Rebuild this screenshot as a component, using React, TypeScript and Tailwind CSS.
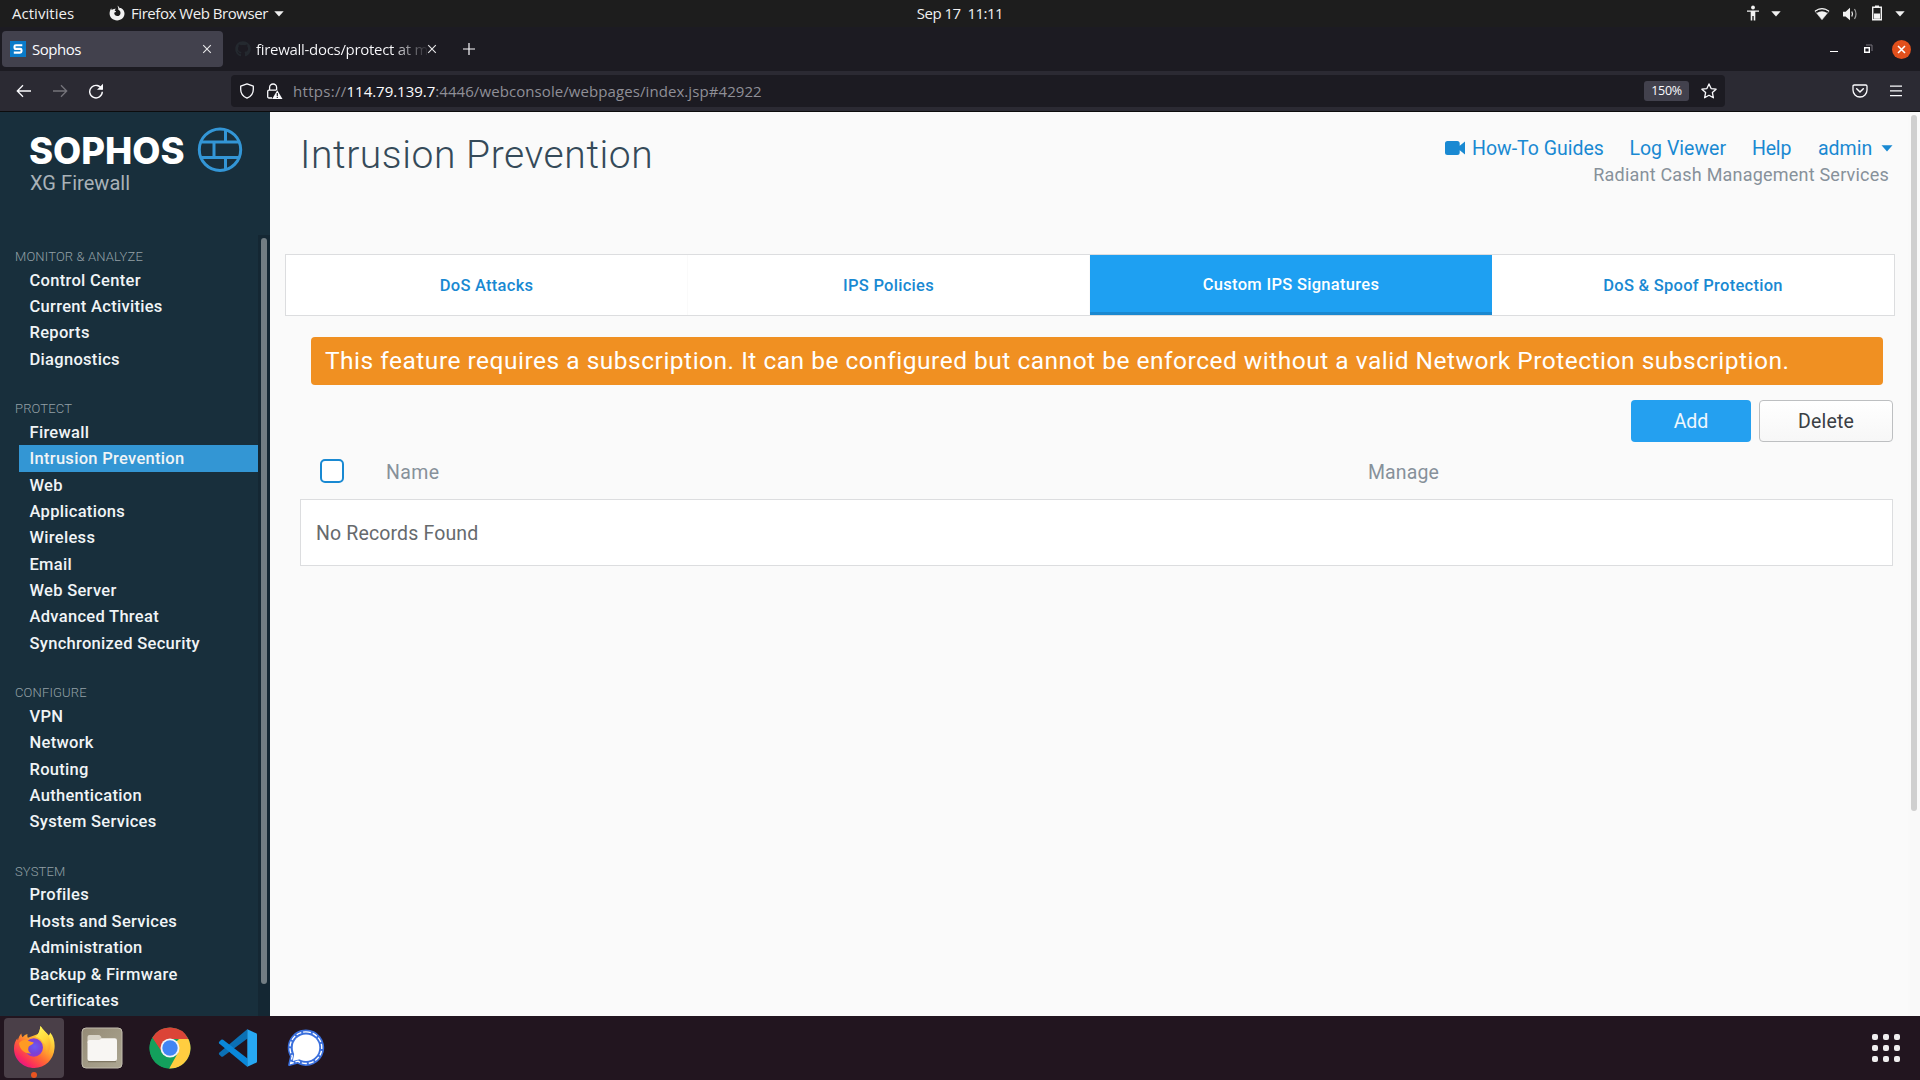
import type { ReactNode } from "react";
import { FaGithub } from "react-icons/fa";

const navGroups = [
  { title: "MONITOR & ANALYZE", items: ["Control Center", "Current Activities", "Reports", "Diagnostics"] },
  {
    title: "PROTECT",
    items: [
      "Firewall",
      "Intrusion Prevention",
      "Web",
      "Applications",
      "Wireless",
      "Email",
      "Web Server",
      "Advanced Threat",
      "Synchronized Security",
    ],
  },
  { title: "CONFIGURE", items: ["VPN", "Network", "Routing", "Authentication", "System Services"] },
  {
    title: "SYSTEM",
    items: ["Profiles", "Hosts and Services", "Administration", "Backup & Firmware", "Certificates"],
  },
];

function Caret({ className }: { className: string }) {
  return (
    <svg viewBox="0 0 10 6" className={className} fill="currentColor">
      <path d="M0.3 0.3h9.4L5 5.6z" />
    </svg>
  );
}

function CloseX() {
  return (
    <svg viewBox="0 0 10 10" className="size-[10px] shrink-0" fill="none" stroke="#e8e8ea" strokeWidth="1.1">
      <path d="M1.2 1.2l7.6 7.6M8.8 1.2l-7.6 7.6" />
    </svg>
  );
}

function SystemBar() {
  return (
    <header className="grid h-[27px] shrink-0 grid-cols-[1fr_auto_1fr] items-center bg-[#1d1d1d] text-[15px] text-[#f0f0f0]">
      <div className="flex items-center pl-3">
        <span className="w-[97px] tracking-[0.03px]">Activities</span>
        <svg viewBox="0 0 16 16" className="mt-[-1px] size-4" fill="#f2f2f2">
          <path d="M8.3.5c1.2.7 2 1.6 2.4 2.7.6-.2 1.1-.1 1.6.1C14.3 4.600 15.500 6.500 15.500 8.600c0 3.900-3.300 6.900-7.400 6.900S.6 12.500.6 8.600C.6 6.500 1.300 4.500 2.300 3.200c0 .700.200 1.200.500 1.700C3.500 4.300 4.300 4 5.300 4c.500-.300 1-.400 1.600-.300C6.200 4.300 5.700 5 5.800 5.700c.900.200 1.300.500 1.200.900-.200.700-1.600.700-1.800 1.500.100 1.700 1.500 3 3.100 3 1.800 0 3.200-1.400 3.200-3.200 0-1.500-.900-2.600-2.200-3.100C9.500 3.300 9.100 1.800 8.300.5z" />
        </svg>
        <span className="ml-[6px] tracking-[-0.45px]">Firefox Web Browser</span>
        <Caret className="ml-[6px] h-[6px] w-[10px]" />
      </div>
      <span className="whitespace-pre tracking-[-0.5px]">Sep 17  11:11</span>
      <div className="flex items-center justify-end pr-[15px]">
        <svg viewBox="0 0 14 16" className="mt-[-1px] h-4 w-[14px]" fill="#f2f2f2">
          <circle cx="7" cy="2.500" r="1.900" />
          <path d="M1 5.500h12v1.300H9.300V15.500H7.700V11H6.300v4.500H4.700V6.800H1z" />
        </svg>
        <Caret className="ml-[11px] h-[6px] w-[10px]" />
        <svg viewBox="0 0 16 14" className="ml-[33px] h-[14px] w-4" fill="none">
          <path d="M1 4.200Q8-.8 15 4.200L8 12.800z" stroke="#8a8a8a" strokeWidth="1" />
          <path d="M1 4.200Q8-.8 15 4.200" stroke="#f2f2f2" strokeWidth="1.200" />
          <path d="M2.600 6Q8 2.300 13.400 6L8 12.800z" fill="#f2f2f2" />
        </svg>
        <svg viewBox="0 0 16 14" className="ml-[12px] h-[14px] w-4" fill="none">
          <path d="M1 4.800h2.600L8 .8v12.400L3.600 9.400H1z" fill="#f2f2f2" />
          <path d="M9.800 4.500q1.400 2.500 0 5" stroke="#f2f2f2" strokeWidth="1.200" />
          <path d="M12.500 2q3 5 0 10" stroke="#a0a0a0" strokeWidth="1.200" />
        </svg>
        <svg viewBox="0 0 12 16" className="ml-[13px] mt-[-1px] h-4 w-3">
          <path d="M4 .5h4v2H4z" fill="#f2f2f2" />
          <path d="M1.700 2.200h8.600v12.600H1.700z" fill="none" stroke="#f2f2f2" strokeWidth="1.400" />
          <path d="M3 8.500h6v5.300H3z" fill="#f2f2f2" />
        </svg>
        <Caret className="ml-[12px] h-[6px] w-[10px]" />
      </div>
    </header>
  );
}

function TabStrip() {
  return (
    <div className="flex h-11 shrink-0 items-center bg-[#1c1b22] pr-[9px] pl-[2px] text-[15px] text-[#fbfbfe]">
      <div className="flex h-9 w-[221px] items-center rounded bg-[#42414d] pr-[11px] pl-2">
        <svg viewBox="0 0 16 16" className="size-4">
          <path d="M0 0h16v16H0z" fill="#0a7bc9" />
          <path d="M12.300 4.200H5.800Q4.500 4.200 4.500 5.500v.9Q4.500 7.900 6 7.900h4.200q1.300 0 1.300 1.200v1.200q0 1.300-1.500 1.300H3.800" fill="none" stroke="#fff" strokeWidth="2.100" />
        </svg>
        <span className="ml-[6px] flex-1 tracking-[-0.5px]">Sophos</span>
        <CloseX />
      </div>
      <div className="ml-3 flex h-9 items-center">
        <FaGithub className="size-4 text-[#24292f]" />
        <span className="ml-[5px] w-[171px] bg-gradient-to-r from-[#fbfbfe] from-[80%] to-[#2a2930] bg-clip-text tracking-[-0.3px] whitespace-nowrap text-transparent">
          firewall-docs/protect at m
        </span>
        <CloseX />
      </div>
      <svg viewBox="0 0 12 12" className="ml-[26px] size-3" stroke="#fbfbfe" strokeWidth="1.200">
        <path d="M6 0v12M0 6h12" />
      </svg>
      <div className="ml-auto flex items-center gap-[24px]">
        <div className="mt-1 h-px w-2 bg-white" />
        <svg viewBox="0 0 10 10" className="ml-[1px] size-[10px]" fill="none">
          <path d="M3 1h6v6" stroke="#76757c" strokeWidth="1" />
          <path d="M1.700 3.700h4.600v4.600H1.700z" stroke="#fff" strokeWidth="1.400" />
        </svg>
        <svg viewBox="0 0 18 18" className="ml-[-5px] size-[19px]">
          <circle cx="9" cy="9" r="9" fill="#e2501c" />
          <path d="M5.700 5.700l6.600 6.600M12.300 5.700l-6.600 6.600" stroke="#fff" strokeWidth="1.500" />
        </svg>
      </div>
    </div>
  );
}

function Toolbar() {
  return (
    <div className="flex h-[41px] shrink-0 items-center border-b border-[#0c0c0d] bg-[#2b2a33] pr-[17px] pl-4 text-[15px]">
      <svg viewBox="0 0 16 16" className="size-4" fill="none" stroke="#fbfbfe" strokeWidth="1.300">
        <path d="M15 8H1.500M7 2.300L1.300 8 7 13.700" />
      </svg>
      <svg viewBox="0 0 16 16" className="ml-5 size-4" fill="none" stroke="#75747b" strokeWidth="1.300">
        <path d="M1 8h13.500M9 2.300L14.700 8 9 13.700" />
      </svg>
      <svg viewBox="0 0 16 16" className="ml-5 size-4" fill="none" stroke="#fbfbfe" strokeWidth="1.400">
        <path d="M13.800 6.200A6.300 6.300 0 1 0 14.300 8.800" />
        <path d="M15 .8v6H9z" fill="#fbfbfe" stroke="none" />
      </svg>
      <div className="ml-[127px] flex h-8 w-[1494px] items-center rounded bg-[#1c1b22] pr-2 pl-2">
        <svg viewBox="0 0 16 16" className="size-4" fill="none" stroke="#fbfbfe" strokeWidth="1.300">
          <path d="M8 .9l6.300 2.200v3.400c0 4-2.300 7-6.300 8.700C4 13.500 1.700 10.500 1.700 6.500V3.100z" strokeLinejoin="round" />
        </svg>
        <svg viewBox="0 0 17 17" className="ml-[11px] size-[17px]" fill="none">
          <path d="M3.600 7V4.500a3.500 3.500 0 0 1 7 0V7" stroke="#fbfbfe" strokeWidth="1.300" />
          <path d="M6 15H3a1.300 1.300 0 0 1-1.300-1.300V8.400A1.300 1.300 0 0 1 3 7.100h7.500" stroke="#fbfbfe" strokeWidth="1.300" />
          <path d="M11.300 7.200l5.200 8.800H6.100z" fill="#fbfbfe" />
          <path d="M11.300 10v3M11.300 13.800v1.200" stroke="#1c1b22" strokeWidth="1.200" />
        </svg>
        <div className="ml-[10px] flex flex-1 text-[#8f8f97]">
          <span className="tracking-[0.3px]">https://</span>
          <span className="tracking-[-0.03px] text-[#fbfbfe]">114.79.139.7</span>
          <span className="tracking-[0.080px]">:4446/webconsole/webpages/index.jsp#42922</span>
        </div>
        <span className="mr-3 flex h-5 w-[45px] items-center justify-center rounded-[3px] bg-[#42414d] text-[12.5px] tracking-[-0.3px] text-[#fbfbfe]">
          150%
        </span>
        <svg viewBox="0 0 16 16" className="size-4" fill="none" stroke="#fbfbfe" strokeWidth="1.300" strokeLinejoin="round">
          <path d="M8 .9l2.100 4.700 5 .6-3.700 3.400 1 5.200L8 12.300l-4.400 2.500 1-5.200L.9 6.200l5-.6z" />
        </svg>
      </div>
      <div className="ml-auto flex items-center gap-[21px]">
        <svg viewBox="0 0 16 16" className="size-4" fill="none" stroke="#fbfbfe" strokeWidth="1.300">
          <path d="M2.300 2h11.400Q15 2 15 3.200V7A7 7 0 0 1 1 7V3.200Q1 2 2.300 2z" />
          <path d="M4.700 5.800L8 9l3.300-3.200" strokeWidth="1.500" strokeLinecap="round" strokeLinejoin="round" />
        </svg>
        <svg viewBox="0 0 14 14" className="size-[14px]" stroke="#fbfbfe" strokeWidth="1.200">
          <path d="M1 2.200h12M1 6.900h12M1 11.600h12" />
        </svg>
      </div>
    </div>
  );
}

function Sidebar() {
  return (
    <aside className="flex w-[270px] shrink-0 flex-col bg-[#182f3c]">
      <div className="h-[123px] shrink-0 pt-[15px] pl-[28px]">
        <div className="flex items-start">
          <div className="w-[169px]">
            <div className="ml-px pt-[5px] font-['Inter'] text-[36.500px] leading-[38px] font-extrabold tracking-[-0.05px] text-white">
              SOPHOS
            </div>
            <div className="mt-[1px] ml-[2px] text-[20px] leading-[24px] tracking-[0.05px] text-[#a9b2b8]">
              XG Firewall
            </div>
          </div>
          <svg viewBox="0 0 46 46" className="size-[46px]" fill="none" stroke="#3396d6" strokeWidth="3">
            <circle cx="23" cy="22.700" r="20.700" />
            <path d="M4.500 15h37M4.500 30.500h37M28.500 3v12M17 15v15.500M28.500 30.500V42" />
          </svg>
        </div>
      </div>
      <div className="flex min-h-0 flex-1">
        <nav className="min-w-0 flex-1 overflow-hidden pt-[10px]">
          {navGroups.map((group) => (
            <section key={group.title} className="mb-[25px]">
              <h2 className="h-[21.600px] pl-[15px] text-[13px] leading-[23.600px] font-light tracking-[0.15px] text-[#93a0a6]">
                {group.title}
              </h2>
              <ul>
                {group.items.map((item) => (
                  <li
                    key={item}
                    className={
                      "ml-[19px] h-[26.400px] pl-[10.500px] text-[16.500px] leading-[28.800px] font-medium tracking-[0.3px] whitespace-nowrap text-[#f0f4f6] " +
                      (item === "Intrusion Prevention" ? "bg-[#3396d4]" : "")
                    }
                  >
                    {item}
                  </li>
                ))}
              </ul>
            </section>
          ))}
        </nav>
        <div className="w-3 shrink-0 bg-[#142733] px-[3px] pt-[3px]">
          <div className="h-[746px] rounded-full bg-[#727d83]" />
        </div>
      </div>
    </aside>
  );
}

function Tab({ children, last = false }: { children: ReactNode; last?: boolean }) {
  return (
    <div
      className={
        "flex items-center justify-center pt-[3px] text-[16.500px] font-medium tracking-[0.27px] text-[#1989d2] " +
        (last ? "" : "border-r border-[#fafafa]")
      }
    >
      {children}
    </div>
  );
}

function MainPanel() {
  return (
    <main className="flex min-w-0 flex-1 bg-[#fafafa]">
      <div className="min-w-0 flex-1 pl-[15px]">
        <div className="flex h-[142px] justify-between pr-[15px] pl-[13px]">
          <h1 className="pt-[19px] pl-[2px] text-[39px] leading-[48px] font-light tracking-[0.580px] text-[#354a59]">
            Intrusion Prevention
          </h1>
          <div className="pt-[23px]">
            <div className="flex h-[26px] items-center justify-end pt-[2px] text-[19.500px] text-[#1989d2]">
              <svg viewBox="0 0 20 14" className="mt-[-2px] h-[14px] w-5" fill="currentColor">
                <path d="M2.500 0h9.700a2.500 2.500 0 0 1 2.500 2.500v2.300L20 .6v12.800l-5.300-4.200v2.300a2.500 2.500 0 0 1-2.500 2.500H2.500A2.500 2.500 0 0 1 0 11.500v-9A2.500 2.500 0 0 1 2.500 0z" />
              </svg>
              <span className="ml-[7px] w-[157.500px]">How-To Guides</span>
              <span className="w-[122.500px]">Log Viewer</span>
              <span className="w-[66px] tracking-[-0.2px]">Help</span>
              <span className="w-[63px]">admin</span>
              <Caret className="mt-[-1px] h-[7px] w-[12px]" />
            </div>
            <div className="pr-[4px] text-right text-[18px] leading-[27px] tracking-[0.210px] text-[#87919a]">
              Radiant Cash Management Services
            </div>
          </div>
        </div>
        <div className="grid h-[62px] w-[1610px] grid-cols-4 border border-[#dcdddf] bg-white">
          <Tab>DoS Attacks</Tab>
          <Tab>IPS Policies</Tab>
          <div className="flex items-center justify-center border-b-[3px] border-[#1a88d0] bg-[#1ea0f2] pt-[3px] text-[16.500px] font-medium tracking-[0.3px] text-white">
            Custom IPS Signatures
          </div>
          <Tab last>DoS &amp; Spoof Protection</Tab>
        </div>
        <div className="mt-[21px] ml-[26px] flex h-12 w-[1572px] items-center rounded bg-[#f09022] pl-[14px] text-[24.500px] tracking-[0.502px] whitespace-nowrap text-white">
          This feature requires a subscription. It can be configured but cannot be enforced without a valid Network
          Protection subscription.
        </div>
        <div className="mt-[15px] flex justify-end gap-2 pr-[15px] text-[19.500px]">
          <button className="h-[42px] w-[120px] rounded bg-[#24a0f0] pt-[2px] text-[#eef7fd]">Add</button>
          <button className="h-[42px] w-[134px] rounded border border-[#bdbfc1] bg-gradient-to-b from-white to-[#f7f7f7] pt-[2px] tracking-[0.2px] text-[#3a3f44]">
            Delete
          </button>
        </div>
        <div className="ml-[15px] w-[1593px] text-[19.500px]">
          <div className="flex h-[57px] items-center pt-[1px] pl-[20px] text-[#87919a]">
            <div className="size-6 rounded-[5px] border-2 border-[#1989d2] bg-white" />
            <span className="ml-[42px] w-[982px] pt-[3px] tracking-[0.400px]">Name</span>
            <span className="pt-[3px] tracking-[0.1px]">Manage</span>
          </div>
          <div className="flex h-[67px] items-center border border-[#dcdddf] bg-white pt-[2px] pl-[15px] tracking-[0.14px] text-[#666a6d]">
            No Records Found
          </div>
        </div>
      </div>
      <div className="w-3 shrink-0 bg-[#f9f9f9] px-[3px] pt-[3px]">
        <div className="h-[696px] rounded-full bg-[#cfcfcf]" />
      </div>
    </main>
  );
}

function FirefoxIcon() {
  return (
    <svg viewBox="0 0 42 44" className="h-[44px] w-[42px]">
      <defs>
        <linearGradient id="ffBody" x1="0.850" y1="0.100" x2="0.200" y2="0.950">
          <stop offset="0" stopColor="#fff44f" />
          <stop offset="0.350" stopColor="#ffb02e" />
          <stop offset="0.600" stopColor="#ff6a33" />
          <stop offset="0.850" stopColor="#fb2d5c" />
          <stop offset="1" stopColor="#e31587" />
        </linearGradient>
        <radialGradient id="ffGlobe" cx="0.550" cy="0.450" r="0.600">
          <stop offset="0" stopColor="#6a5af5" />
          <stop offset="0.600" stopColor="#7a42d6" />
          <stop offset="1" stopColor="#9a35c8" />
        </radialGradient>
        <linearGradient id="ffFlame" x1="0.300" y1="0" x2="0.700" y2="1">
          <stop offset="0" stopColor="#fff65a" />
          <stop offset="0.500" stopColor="#ffd83a" />
          <stop offset="1" stopColor="#ff9a2c" />
        </linearGradient>
      </defs>
      <path d="M8.300 8.500c.2 1.800.6 2.800 1.400 3.800 1.500-2 3-2.900 4.800-3.300-.3 1.500-.2 2.600.4 3.700L25 9c2-2 1.700-5 2.500-8 2 3.500 6 6.500 8.300 9.500.8-1 1.200-1.800 1.300-3 3.700 4.200 5 10 4.400 16C40.700 34.500 32 43 21.300 43 10 43 1 34.500 1 23.500c0-4.500 1.500-8 3.300-10.300.1 1 .3 1.800.7 2.400.4-2.800 1.500-5.200 3.300-7.100z" fill="url(#ffBody)" />
      <circle cx="20.800" cy="22.500" r="9.200" fill="url(#ffGlobe)" />
      <path d="M27.500 1c2 3.700 6.300 6.800 8.500 11.500 2.800 6 1.500 13-2.500 17.500 1-6.500-.5-10.500-3.500-12.500-1.500-3.300-4.500-5-7.500-5.500C25.500 9.500 26.800 5.500 27.500 1z" fill="url(#ffFlame)" />
      <path d="M6 18c2.500-2.700 5.500-3.500 8.500-3 1.300 1.800 3.800 1.600 6.300 2.500-.8 2.500-4.500 2.600-5.300 4.800-1 2.700.3 5 2.500 6.200C11.500 29 6.500 24.500 6 18z" fill="#ff9a24" />
    </svg>
  );
}

function FilesIcon() {
  return (
    <svg viewBox="0 0 42 42" className="size-[42px]">
      <defs>
        <linearGradient id="filesBg" x1="0" y1="0" x2="1" y2="1">
          <stop offset="0" stopColor="#958b76" />
          <stop offset="1" stopColor="#aca692" />
        </linearGradient>
      </defs>
      <rect x="1" y="1" width="40" height="40" rx="4" fill="url(#filesBg)" stroke="#c2bcae" strokeWidth="1" />
      <path d="M6.500 16V10Q6.500 8 8.500 8h9q1.500 0 2.200 1.300L21 12v4z" fill="#d9d4c8" />
      <path d="M7 34.500h28" stroke="#7f7763" strokeWidth="1.500" />
      <path d="M8.500 13h9.300q1 0 1.700-.800.700-.900 1.800-.900h12.500q2.200 0 2.200 2.200v18.500q0 2-2.200 2H8.500q-2 0-2-2V15q0-2 2-2z" fill="#f8f6f3" />
    </svg>
  );
}

function ChromeIcon() {
  return (
    <svg viewBox="0 0 42 42" className="size-[42px]">
      <circle cx="21" cy="21" r="20.500" fill="#13a05c" />
      <path d="M21 21L30 12h9.400A20.500 20.500 0 0 1 20.200 41.500z" fill="#ffcd40" />
      <path d="M3.300 10.700A20.500 20.500 0 0 1 39.400 12H21l-8.800 12z" fill="#db4437" />
      <path d="M12.800 25.500L3.300 10.700A20.500 20.500 0 0 0 20.200 41.500l8.500-15.300z" fill="#13a05c" />
      <circle cx="21" cy="21" r="9.500" fill="#f3f4f6" />
      <circle cx="21" cy="21" r="7.700" fill="#4285f4" />
    </svg>
  );
}

function VsCodeIcon() {
  return (
    <svg viewBox="0 0 40 40" className="size-10">
      <path d="M29.500 10.500V1L1.200 24.800Q.4 25.700 1.200 26.500L3.200 28.400Q4.100 29.100 5.100 28.400z" fill="#0b70b5" />
      <path d="M5.100 11.800L29.500 30.500V39L1.200 15.500Q.4 14.500 1.200 13.700L3.200 11.800Q4.100 11.100 5.100 11.800z" fill="#0a88da" />
      <path d="M29.300 1.200L38.200 5.300Q39 5.700 39 6.600V33.400Q39 34.300 38.200 34.700L29.300 38.800z" fill="#27a8f3" />
    </svg>
  );
}

function SignalIcon() {
  return (
    <svg viewBox="0 0 40 40" className="size-10">
      <path d="M20 1.500a18.200 18.200 0 1 1-8.500 34.300L3.500 38Q1.800 38.300 2.200 36.500L4 28.500A18.200 18.200 0 0 1 20 1.500z" fill="#3a6fdc" />
      <path d="M20 3.900A15.800 15.800 0 1 1 11.800 33.200L4.700 35.400 6.300 28A15.800 15.800 0 0 1 20 3.900z" fill="none" stroke="#fff" strokeWidth="1.400" strokeDasharray="5 1.900" />
      <circle cx="20" cy="19.700" r="13.300" fill="#fff" />
      <path d="M8.500 24.500L6.800 33l8-2z" fill="#fff" />
    </svg>
  );
}

function Dock() {
  return (
    <footer className="flex h-16 shrink-0 items-center gap-2 bg-[#22151f] pr-5 pl-1">
      <div className="relative flex size-[60px] items-center justify-center rounded-[4px] bg-[#4a3f48] pb-[3px]">
        <FirefoxIcon />
        <span className="absolute bottom-0 left-[27px] size-[6px] rounded-full bg-[#e95420]" />
      </div>
      <div className="flex size-[60px] items-center justify-center">
        <FilesIcon />
      </div>
      <div className="flex size-[60px] items-center justify-center">
        <ChromeIcon />
      </div>
      <div className="flex size-[60px] items-center justify-center">
        <VsCodeIcon />
      </div>
      <div className="flex size-[60px] items-center justify-center">
        <SignalIcon />
      </div>
      <div className="ml-auto grid grid-cols-3 gap-[5px]">
        {Array.from({ length: 9 }, (_, i) => (
          <span key={i} className="size-[6px] rounded-[2px] bg-[#f0eeef]" />
        ))}
      </div>
    </footer>
  );
}

export default function App() {
  return (
    <div className="flex h-[1080px] w-[1920px] flex-col overflow-hidden font-['Open_Sans','Noto_Sans',sans-serif]">
      <SystemBar />
      <TabStrip />
      <Toolbar />
      <div className="flex min-h-0 flex-1 font-['Roboto',sans-serif]">
        <Sidebar />
        <MainPanel />
      </div>
      <Dock />
    </div>
  );
}
